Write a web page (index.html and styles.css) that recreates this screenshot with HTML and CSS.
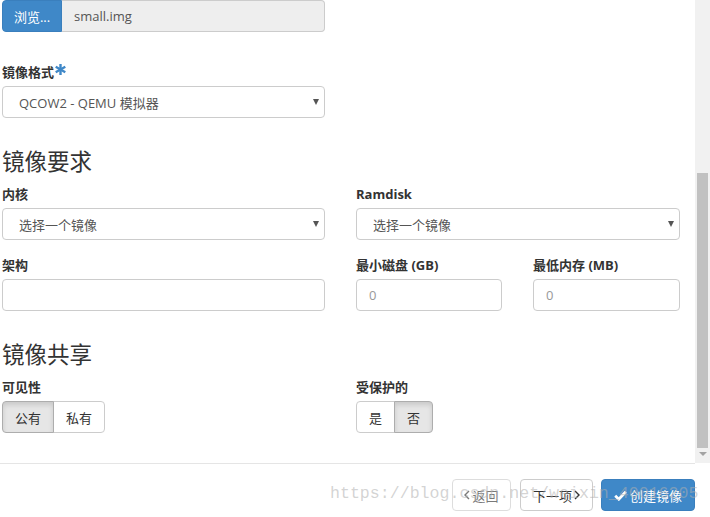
FILE: index.html
```html
<!DOCTYPE html>
<html lang="zh">
<head>
<meta charset="utf-8">
<title>创建镜像</title>
<link rel="stylesheet" href="styles.css">
</head>
<body>
<div class="page">
  <div class="main">
    <div class="content">
      <div class="file-group">
        <span class="btn-browse">浏览...</span>
        <span class="file-name">small.img</span>
      </div>

      <div class="form-group narrow">
        <label class="lbl">镜像格式<svg class="star" width="11" height="11" viewBox="0 0 11 11"><g stroke="#3f88c8" stroke-width="2.4" stroke-linecap="butt"><line x1="5.5" y1="0" x2="5.5" y2="11"/><line x1="0.7" y1="2.75" x2="10.3" y2="8.25"/><line x1="0.7" y1="8.25" x2="10.3" y2="2.75"/></g></svg></label>
        <div class="select"><span>QCOW2 - QEMU 模拟器</span><i class="caret"></i></div>
      </div>

      <h3 class="section">镜像要求</h3>
      <div class="grid2">
        <div class="form-group">
          <label class="lbl">内核</label>
          <div class="select"><span>选择一个镜像</span><i class="caret"></i></div>
        </div>
        <div class="form-group">
          <label class="lbl">Ramdisk</label>
          <div class="select"><span>选择一个镜像</span><i class="caret"></i></div>
        </div>
        <div class="form-group">
          <label class="lbl">架构</label>
          <div class="input"></div>
        </div>
        <div class="sub2">
          <div class="form-group">
            <label class="lbl">最小磁盘 (GB)</label>
            <div class="input placeholder">0</div>
          </div>
          <div class="form-group">
            <label class="lbl">最低内存 (MB)</label>
            <div class="input placeholder">0</div>
          </div>
        </div>
      </div>

      <h3 class="section">镜像共享</h3>
      <div class="grid2">
        <div class="form-group">
          <label class="lbl">可见性</label>
          <div class="btn-group">
            <span class="tbtn active">公有</span><span class="tbtn">私有</span>
          </div>
        </div>
        <div class="form-group">
          <label class="lbl">受保护的</label>
          <div class="btn-group">
            <span class="tbtn">是</span><span class="tbtn active">否</span>
          </div>
        </div>
      </div>
    </div>
    <div class="scrollbar">
      <div class="thumb"></div>
      <div class="sb-arrow"></div>
    </div>
  </div>

  <div class="footer">
    <span class="btn btn-default disabled"><svg class="chev" width="6" height="10" viewBox="0 0 6 10"><path d="M5 1 L1 5 L5 9" fill="none" stroke="currentColor" stroke-width="1.4"/></svg>返回</span>
    <span class="btn btn-default next">下一项<svg class="chev" width="6" height="10" viewBox="0 0 6 10"><path d="M1 1 L5 5 L1 9" fill="none" stroke="currentColor" stroke-width="1.4"/></svg></span>
    <span class="btn btn-primary"><svg class="check" width="13" height="11" viewBox="0 0 13 11"><path d="M1.2 5.8 L4.8 9.2 L11.8 1.8" fill="none" stroke="#fff" stroke-width="2.8" stroke-linejoin="miter"/></svg>创建镜像</span>
    <div class="watermark">https://blog.csdn.net/weixin_40016205</div>
  </div>
</div>
</body>
</html>
```

FILE: styles.css
```css
* { box-sizing: border-box; }

html, body {
  margin: 0;
  padding: 0;
  background: #fff;
}

body {
  font-family: "Open Sans", "Noto Sans CJK SC", sans-serif;
  font-size: 13px;
  color: #333;
  width: 710px;
  height: 517px;
  overflow: hidden;
}

.page {
  display: flex;
  flex-direction: column;
}

.main {
  display: flex;
  height: 463px;
}

.content {
  width: 695px;
  padding-left: 2px;
  overflow: hidden;
  display: flex;
  flex-direction: column;
  align-items: flex-start;
}

/* file input */
.file-group {
  display: flex;
  width: 323px;
  height: 32px;
  margin-bottom: 31px;
}

.btn-browse {
  width: 60px;
  display: flex;
  align-items: center;
  justify-content: center;
  background: #3f88c8;
  border: 1px solid #3a7fbd;
  border-radius: 4px 0 0 4px;
  color: #fff;
}

.file-name {
  flex: 1;
  display: flex;
  align-items: center;
  padding-left: 12px;
  background: #eee;
  border: 1px solid #ccc;
  border-left: none;
  border-radius: 0 4px 4px 0;
  color: #555;
}

/* form */
.form-group {
  margin-bottom: 16px;
}

.narrow {
  width: 323px;
}

.lbl {
  display: flex;
  align-items: flex-start;
  height: 18px;
  line-height: 18px;
  margin-bottom: 5px;
  font-weight: 700;
  color: #333;
}

.star {
  margin-left: 1px;
  margin-top: 1px;
}

.select,
.input {
  height: 32px;
  border: 1px solid #ccc;
  border-radius: 4px;
  background: #fff;
  display: flex;
  align-items: center;
  color: #555;
}

.select {
  justify-content: space-between;
  padding: 0 5px 0 16px;
}

.input {
  padding: 0 12px;
}

.placeholder {
  color: #999;
}

.caret {
  width: 0;
  height: 0;
  border-left: 3.5px solid transparent;
  border-right: 3.5px solid transparent;
  border-top: 6px solid #555;
  margin-top: -1px;
}

.section {
  margin: 15px 0 10px 0;
  height: 26px;
  line-height: 26px;
  font-size: 22.5px;
  font-weight: 400;
  color: #333;
}

.grid2 {
  display: grid;
  grid-template-columns: 323px 324px;
  column-gap: 31px;
}

.sub2 {
  display: grid;
  grid-template-columns: 146px 147px;
  column-gap: 31px;
}

/* toggle buttons */
.btn-group {
  display: flex;
}

.tbtn {
  height: 32px;
  padding: 0 12px;
  display: flex;
  align-items: center;
  border: 1px solid #ccc;
  background: #fff;
  color: #333;
}

.tbtn + .tbtn {
  margin-left: -1px;
}

.tbtn:first-child {
  border-radius: 4px 0 0 4px;
}

.tbtn:last-child {
  border-radius: 0 4px 4px 0;
}

.tbtn.active {
  background: #e6e6e6;
  border-color: #adadad;
  box-shadow: inset 0 3px 5px rgba(0, 0, 0, 0.125);
  position: relative;
}

/* scrollbar */
.scrollbar {
  width: 15px;
  height: 463px;
  background: #f1f1f1;
  display: flex;
  flex-direction: column;
  align-items: center;
  padding-top: 173px;
}

.thumb {
  width: 11px;
  height: 275px;
  background: #c1c1c1;
}

.sb-arrow {
  margin-top: 4px;
  width: 0;
  height: 0;
  border-left: 4px solid transparent;
  border-right: 4px solid transparent;
  border-top: 4px solid #a3a3a3;
}

/* footer */
.footer {
  position: relative;
  width: 695px;
  border-top: 1px solid #e5e5e5;
  padding-top: 15px;
  display: flex;
  justify-content: flex-end;
  gap: 8px;
}

.btn {
  height: 32px;
  padding: 0 4px;
  display: flex;
  align-items: center;
  justify-content: center;
  gap: 2px;
  border: 1px solid #ccc;
  border-radius: 4px;
  background: #fff;
  color: #333;
  white-space: nowrap;
  flex-shrink: 0;
}

.btn.disabled {
  opacity: 0.65;
  width: 59px;
  margin-right: 1px;
}

.btn.next {
  width: 73px;
}

.btn-primary {
  width: 94px;
  background: #3f88c8;
  border-color: #3a7fbd;
  color: #fff;
  gap: 3px;
}

.chev {
  display: block;
}

.check {
  display: block;
}

.watermark {
  position: absolute;
  left: 330px;
  top: 20px;
  font-family: "Liberation Mono", monospace;
  font-size: 16.6px;
  line-height: 20px;
  color: rgba(175, 175, 175, 0.55);
  white-space: nowrap;
  pointer-events: none;
}
```
